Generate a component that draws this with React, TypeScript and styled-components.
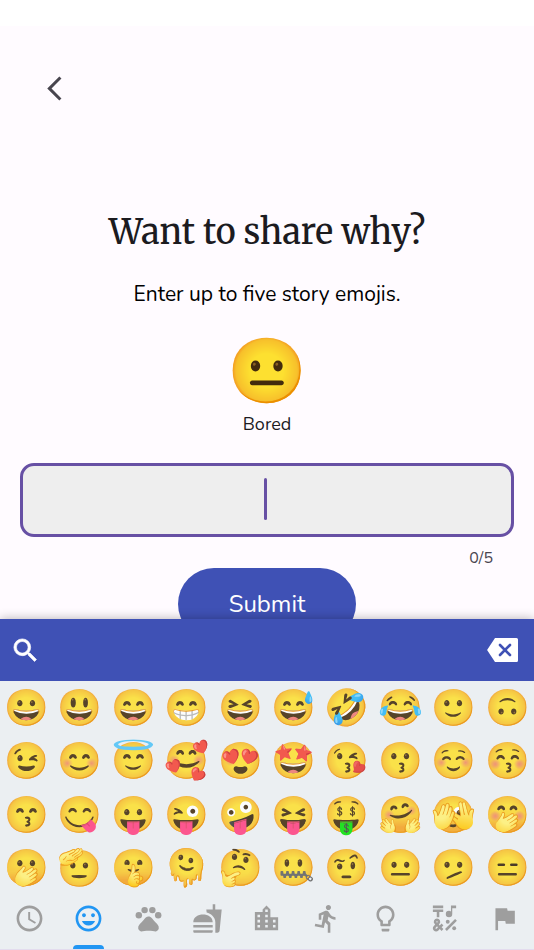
import React, { useState } from 'react';
import type { IconType } from 'react-icons';
import styled, { createGlobalStyle } from 'styled-components';
import {
  MdAccessTime,
  MdArrowBackIosNew,
  MdDirectionsRun,
  MdEmojiSymbols,
  MdFastfood,
  MdFlag,
  MdLightbulbOutline,
  MdLocationCity,
  MdPets,
  MdSearch,
  MdTagFaces,
} from 'react-icons/md';

const emojis = [
  '😀', '😃', '😄', '😁', '😆', '😅', '🤣', '😂', '🙂', '🙃',
  '😉', '😊', '😇', '🥰', '😍', '🤩', '😘', '😗', '☺️', '😚',
  '😙', '😋', '😛', '😜', '🤪', '😝', '🤑', '🤗', '🫣', '🤭',
  '🫢', '🫡', '🤫', '🫠', '🤔', '🤐', '🤨', '😐', '🫤', '😑',
];

const categories: { label: string; icon: IconType }[] = [
  { label: 'Recent', icon: MdAccessTime },
  { label: 'Smileys', icon: MdTagFaces },
  { label: 'Animals', icon: MdPets },
  { label: 'Food', icon: MdFastfood },
  { label: 'Travel', icon: MdLocationCity },
  { label: 'Activities', icon: MdDirectionsRun },
  { label: 'Objects', icon: MdLightbulbOutline },
  { label: 'Symbols', icon: MdEmojiSymbols },
  { label: 'Flags', icon: MdFlag },
];

const GlobalStyle = createGlobalStyle`
  *, *::before, *::after {
    box-sizing: border-box;
  }
  body {
    margin: 0;
    background: #fffbff;
    color: #1c1b1f;
    font-family: Nunito, Lato, sans-serif;
  }
  button, input {
    font: inherit;
  }
  button {
    border: 0;
    padding: 0;
    background: none;
    cursor: pointer;
  }
`;

const Screen = styled.div`
  display: flex;
  flex-direction: column;
  height: 100vh;
`;

const StatusBar = styled.div`
  flex: none;
  height: 26px;
  background: #ffffff;
`;

const Content = styled.main`
  flex: 1;
  min-height: 0;
  overflow: hidden;
  display: flex;
  flex-direction: column;
  align-items: center;
  padding: 40px 20px 0;
`;

const BackButton = styled.button`
  flex: none;
  align-self: flex-start;
  display: grid;
  place-items: center;
  width: 44px;
  height: 44px;
  margin-left: 12px;
  color: #48454e;
`;

const Title = styled.h1`
  flex: none;
  margin: 98px 0 0;
  font-family: Merriweather, 'Noto Serif', serif;
  font-size: 34px;
  line-height: 48px;
  font-weight: 500;
`;

const Subtitle = styled.p`
  flex: none;
  margin: 24px 0 0;
  font-size: 21px;
  line-height: 28px;
  color: #000000;
`;

const Mood = styled.figure`
  flex: none;
  display: flex;
  flex-direction: column;
  align-items: center;
  margin: 24px 0 0;
`;

const MoodEmoji = styled.span`
  font-family: 'Noto Color Emoji', sans-serif;
  font-size: 64px;
  line-height: 80px;
`;

const MoodName = styled.figcaption`
  font-size: 18px;
  line-height: 24px;
`;

const Field = styled.div`
  flex: none;
  width: 100%;
  margin-top: 27px;
  text-align: right;
`;

const StoryInput = styled.input`
  display: block;
  width: 100%;
  height: 74px;
  padding: 0 16px;
  border: 3px solid #6750a4;
  border-radius: 14px;
  outline: 0;
  background: #eeeeee;
  font-size: 30px;
  text-align: center;
  caret-color: transparent;
`;

const InputFrame = styled.div`
  position: relative;
`;

const Caret = styled.span`
  position: absolute;
  top: 15px;
  bottom: 17px;
  left: calc(50% - 3px);
  width: 3px;
  border-radius: 2px;
  background: #6750a4;
  pointer-events: none;
`;

const Counter = styled.output`
  display: block;
  padding: 11px 21px 0;
  font-size: 16px;
  line-height: 20px;
  color: #49454f;
`;

const SubmitButton = styled.button`
  flex: none;
  min-width: 178px;
  height: 72px;
  border-radius: 36px;
  background: #3f51b5;
  color: #ffffff;
  font-size: 24px;
`;

const Keyboard = styled.section`
  position: relative;
  flex: none;
  background: #ebeff2;
  box-shadow: 0 0 10px rgba(0, 0, 0, 0.3);
`;

const Toolbar = styled.div`
  display: flex;
  align-items: center;
  justify-content: space-between;
  height: 62px;
  padding: 0 15px 0 10px;
  background: #3f51b5;
  color: #ffffff;
`;

const ToolButton = styled.button`
  display: grid;
  place-items: center;
  height: 44px;
  color: inherit;
`;

const SearchIcon = styled(MdSearch)`
  stroke-width: 0;

  path:last-child {
    stroke: currentColor;
    stroke-width: 0.5px;
  }
`;

const EmojiGrid = styled.div`
  display: grid;
  grid-template-columns: repeat(10, 1fr);
`;

const EmojiKey = styled.button`
  display: grid;
  place-items: center;
  min-width: 0;
  aspect-ratio: 1;
  font-family: 'Noto Color Emoji', sans-serif;
  font-size: 36px;
  line-height: 42px;
  opacity: 0.87;
`;

const CategoryBar = styled.nav`
  display: flex;
  height: 55px;
  border-bottom: 1px solid #e3dcee;
`;

const CategoryTab = styled.button<{ $active: boolean }>`
  flex: 1;
  display: flex;
  flex-direction: column;
  align-items: center;
  justify-content: space-between;
  padding-top: 8px;
  color: ${(p) => (p.$active ? '#2196f3' : '#9e9e9e')};

  &::after {
    content: '';
    width: 31px;
    height: 4px;
    border-radius: 4px 4px 0 0;
    background: ${(p) => (p.$active ? 'currentColor' : 'transparent')};
  }
`;

function BackspaceIcon() {
  return (
    <svg width="32" height="24" viewBox="0 0 32 24" aria-hidden="true">
      <path
        d="M8 0H29.500a1.500 1.500 0 0 1 1.500 1.500v21a1.500 1.500 0 0 1-1.500 1.500H8L.4 12.600a1 1 0 0 1 0-1.200Z"
        fill="#ffffff"
      />
      <path d="m13 7 10 10M23 7 13 17" stroke="#3f51b5" strokeWidth="2.600" strokeLinecap="round" />
    </svg>
  );
}

export default function App() {
  const [story, setStory] = useState<string[]>([]);
  const [category, setCategory] = useState('Smileys');

  const addEmoji = (emoji: string) =>
    setStory((current) => (current.length < 5 ? [...current, emoji] : current));

  return (
    <Screen>
      <GlobalStyle />
      <StatusBar />
      <Content>
        <BackButton aria-label="Back">
          <MdArrowBackIosNew size={29} />
        </BackButton>
        <Title>Want to share why?</Title>
        <Subtitle>Enter up to five story emojis.</Subtitle>
        <Mood>
          <MoodEmoji>😐</MoodEmoji>
          <MoodName>Bored</MoodName>
        </Mood>
        <Field>
          <InputFrame>
            <StoryInput aria-label="Story emojis" value={story.join('')} readOnly />
            {story.length === 0 && <Caret />}
          </InputFrame>
          <Counter>{story.length}/5</Counter>
        </Field>
        <SubmitButton>Submit</SubmitButton>
      </Content>
      <Keyboard aria-label="Emoji keyboard">
        <Toolbar>
          <ToolButton aria-label="Search emojis">
            <SearchIcon size={31} />
          </ToolButton>
          <ToolButton aria-label="Delete" onClick={() => setStory((s) => s.slice(0, -1))}>
            <BackspaceIcon />
          </ToolButton>
        </Toolbar>
        <EmojiGrid>
          {emojis.map((emoji) => (
            <EmojiKey key={emoji} onClick={() => addEmoji(emoji)}>
              {emoji}
            </EmojiKey>
          ))}
        </EmojiGrid>
        <CategoryBar aria-label="Emoji categories">
          {categories.map(({ label, icon: Icon }) => (
            <CategoryTab
              key={label}
              aria-label={label}
              $active={label === category}
              onClick={() => setCategory(label)}
            >
              <Icon size={31} />
            </CategoryTab>
          ))}
        </CategoryBar>
      </Keyboard>
    </Screen>
  );
}
